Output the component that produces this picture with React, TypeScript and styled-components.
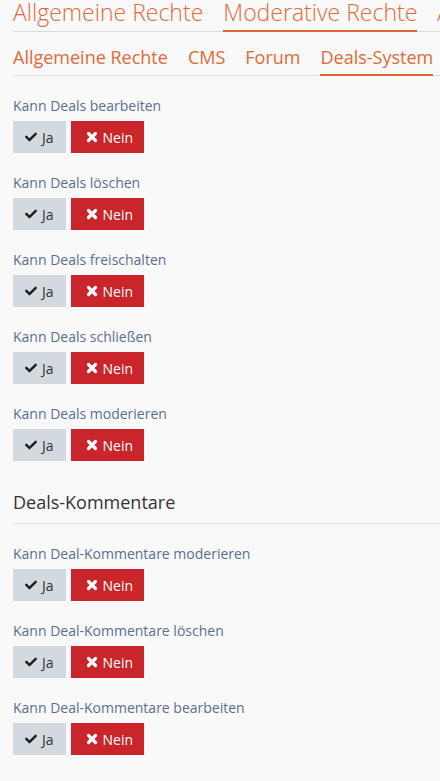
import * as React from 'react';
import styled, { createGlobalStyle } from 'styled-components';
import { FaCheck } from 'react-icons/fa';

const GlobalStyle = createGlobalStyle`
body {
    margin: 0;
    background: #f9f9f9;
    font-family: "Open Sans", "Liberation Sans", sans-serif;
    overflow: hidden;
}
`;

const Page = styled.div`
padding: 0 0 0 13px;
width: 440px;
box-sizing: border-box;
overflow: hidden;
`;

const TabBar = styled.div<{ $small?: boolean }>`
display: flex;
white-space: nowrap;
gap: 20px;
border-bottom: 1px solid #dcdcdc;
margin-top: ${p => (p.$small ? 16 : 0)}px;
margin-right: -200px;
`;

const Tab = styled.div<{ $small?: boolean; $active?: boolean }>`
font-size: ${p => (p.$small ? 18 : 23)}px;
line-height: ${p => (p.$small ? 18 : 24)}px;
font-weight: ${p => (p.$small ? 400 : 300)};
color: #e06a38;
padding-bottom: ${p => (p.$small ? 8 : 6)}px;
border-bottom: 2px solid ${p => (p.$active ? '#dc6530' : 'transparent')};
margin-bottom: -1px;
flex-shrink: 0;
`;

const Group = styled.div`
margin-top: 20px;
`;

const Label = styled.div`
font-size: 14px;
line-height: 20px;
color: #5a6f90;
margin-bottom: 5px;
`;

const Buttons = styled.div`
display: flex;
gap: 5px;
`;

const Button = styled.button<{ $variant: 'yes' | 'no' }>`
display: flex;
align-items: center;
gap: 5px;
height: 32px;
padding: 0 ${p => (p.$variant === 'yes' ? 12 : 11)}px 0 ${p => (p.$variant === 'yes' ? 12 : 15)}px;
border: none;
border-radius: 0;
font-family: inherit;
font-size: 14px;
background: ${p => (p.$variant === 'yes' ? '#d3dadf' : '#c9252b')};
color: ${p => (p.$variant === 'yes' ? '#333' : '#fff')};
svg {
    width: 12px;
    height: 12px;
    color: ${p => (p.$variant === 'yes' ? '#1e1e1e' : '#fff')};
}
`;

const Heading = styled.div`
margin-top: 27px;
font-size: 18px;
line-height: 28px;
color: #333;
padding-bottom: 7px;
border-bottom: 1px solid #dcdcdc;
margin-bottom: 0;
margin-right: -13px;
`;

// heavy cross like the old font-awesome "times"
const CrossIcon = () => (
    <svg viewBox="0 0 12 12">
        <path d="M2.5 2.5 L9.5 9.5 M9.5 2.5 L2.5 9.5" stroke="currentColor" strokeWidth="3.2" strokeLinecap="round" />
    </svg>
);

const dealRights = [
    'Kann Deals bearbeiten',
    'Kann Deals löschen',
    'Kann Deals freischalten',
    'Kann Deals schließen',
    'Kann Deals moderieren',
];

const commentRights = [
    'Kann Deal-Kommentare moderieren',
    'Kann Deal-Kommentare löschen',
    'Kann Deal-Kommentare bearbeiten',
];

const Right: React.FC<{ text: string }> = ({ text }) => (
    <Group>
        <Label>{text}</Label>
        <Buttons>
            <Button $variant="yes"><FaCheck />Ja</Button>
            <Button $variant="no"><CrossIcon />Nein</Button>
        </Buttons>
    </Group>
);

const App: React.FC = () => {
    return (<>
        <GlobalStyle />
        <Page>
            <TabBar>
                <Tab>Allgemeine Rechte</Tab>
                <Tab $active>Moderative Rechte</Tab>
                <Tab>Administrative Rechte</Tab>
            </TabBar>
            <TabBar $small>
                <Tab $small>Allgemeine Rechte</Tab>
                <Tab $small>CMS</Tab>
                <Tab $small>Forum</Tab>
                <Tab $small $active>Deals-System</Tab>
            </TabBar>
            {dealRights.map(r => <Right key={r} text={r} />)}
            <Heading>Deals-Kommentare</Heading>
            {commentRights.map(r => <Right key={r} text={r} />)}
        </Page>
    </>);
};

export default App;
